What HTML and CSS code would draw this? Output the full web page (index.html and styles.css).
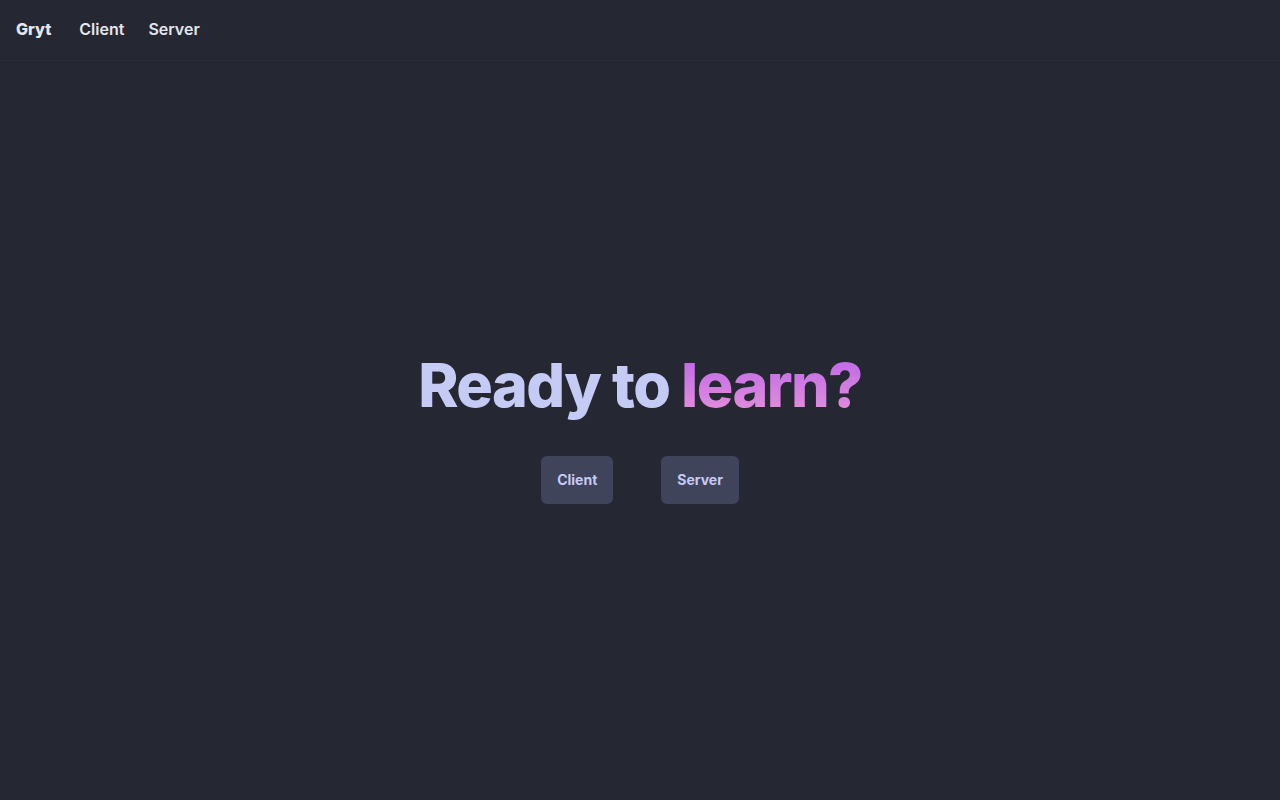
FILE: index.html
```html
<!DOCTYPE html>
<html lang="en">
<head>
<meta charset="utf-8">
<title>Gryt</title>
<link rel="stylesheet" href="styles.css">
</head>
<body>
<header class="topbar">
  <a class="brand" href="#">Gryt</a>
  <a class="nav-link" href="#">Client</a>
  <a class="nav-link" href="#">Server</a>
</header>
<main class="hero">
  <h1 class="title">Ready to <span class="accent">learn?</span></h1>
  <div class="actions">
    <a class="btn" href="#">Client</a>
    <a class="btn" href="#">Server</a>
  </div>
</main>
</body>
</html>
```

FILE: styles.css
```css
html, body {
  margin: 0;
  padding: 0;
  height: 100%;
}
body {
  background: #252733;
  font-family: Inter, "Noto Sans", sans-serif;
  display: flex;
  flex-direction: column;
}
.topbar {
  height: 61px;
  box-sizing: border-box;
  border-bottom: 1px solid #2b2d3a;
  display: flex;
  align-items: center;
  padding: 0 16px 3px;
  gap: 24px;
}
.topbar a {
  text-decoration: none;
  color: #e4e6ee;
  font-size: 16px;
  font-weight: 600;
}
.topbar .brand {
  font-weight: 800;
  margin-right: 4px;
}
.hero {
  flex: 1;
  display: flex;
  flex-direction: column;
  align-items: center;
  justify-content: center;
  padding-bottom: 8px;
}
.title {
  margin: 0;
  font-size: 61px;
  font-weight: 800;
  letter-spacing: -1.6px;
  color: #c5cbf5;
  line-height: 1.2;
}
.accent {
  background: linear-gradient(180deg, #b863ea 0%, #e994d9 100%);
  -webkit-background-clip: text;
  background-clip: text;
  color: transparent;
}
.actions {
  display: flex;
  gap: 48px;
  margin-top: 33px;
}
.btn {
  display: flex;
  align-items: center;
  height: 48px;
  padding: 0 16px;
  border-radius: 6px;
  background: #40445a;
  color: #c5cbf5;
  text-decoration: none;
  font-size: 14px;
  font-weight: 700;
}
```
